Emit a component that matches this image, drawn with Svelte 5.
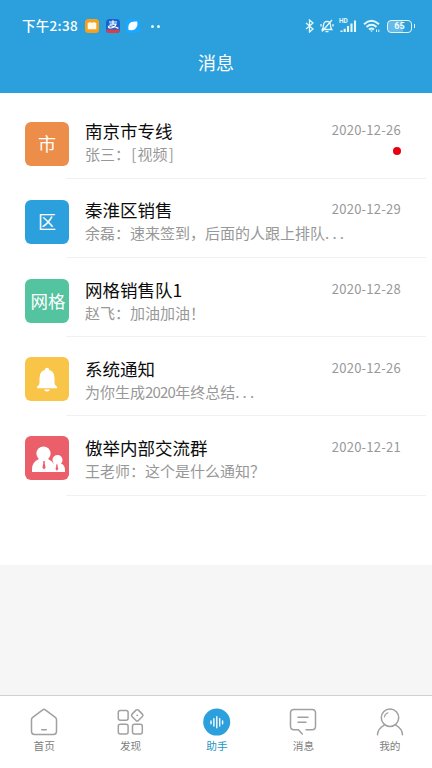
<script lang="ts">
  type Chat = {
    kind: string;
    label?: string;
    color: string;
    title: string;
    preview: string;
    date: string;
    unread?: boolean;
  };

  const chats: Chat[] = [
    { kind: 'text', label: '市', color: '#ed8d4a', title: '南京市专线', preview: '张三：[视频]', date: '2020-12-26', unread: true },
    { kind: 'text', label: '区', color: '#2ca0dc', title: '秦淮区销售', preview: '余磊：速来签到，后面的人跟上排队...', date: '2020-12-29' },
    { kind: 'text', label: '网格', color: '#54c3a0', title: '网格销售队1', preview: '赵飞：加油加油！', date: '2020-12-28' },
    { kind: 'bell', color: '#f9c548', title: '系统通知', preview: '为你生成2020年终总结...', date: '2020-12-26' },
    { kind: 'group', color: '#eb5f6b', title: '傲举内部交流群', preview: '王老师：这个是什么通知？', date: '2020-12-21' },
  ];

  const tabs = [
    { id: 'home', name: '首页' },
    { id: 'discover', name: '发现' },
    { id: 'assistant', name: '助手' },
    { id: 'message', name: '消息' },
    { id: 'mine', name: '我的' },
  ];

  let active = $state('assistant');

  // half-width characters get their own spans so they sit on a half-em grid
  function split(text: string) {
    return text.split(/(\d+|\.+|[[\]])/).filter(Boolean);
  }
</script>

<div class="phone">
  <header>
    <div class="status">
      <div class="status-left">
        <span class="time">下午2:38</span>
        <svg width="14" height="14" viewBox="0 0 14 14">
          <rect width="14" height="14" rx="3.5" fill="#f6a01f" />
          <path d="M2.7 4Q5 2.8 7 3.8Q9 2.8 11.3 4V10.3H2.7Z" fill="#fffbe8" />
        </svg>
        <svg width="14" height="14" viewBox="0 0 14 14">
          <rect width="14" height="14" rx="3.5" fill="#1763cf" />
          <path d="M0.3 10.4H13.7Q13.4 14 10.5 14H3.5Q0.6 14 0.3 10.4Z" fill="#dc3c48" />
          <path d="M3 3H11M7 1.3V5M3.7 5.2H10Q9 8.5 5 9Q2 9 2.5 7.5Q4 5.5 12.5 9.4" fill="none" stroke="#fff" stroke-width="1.2" />
        </svg>
        <svg width="14" height="14" viewBox="0 0 14 14">
          <rect width="14" height="14" rx="3.5" fill="#18a8ff" />
          <path d="M2.5 10.7Q1.6 5 5.3 3.1Q8 2 11.2 2.6Q12.2 7.5 9 10.2Q6 12 2.5 10.7Z" fill="#fff" />
        </svg>
        <span class="dots"><i></i><i></i></span>
      </div>
      <div class="status-right">
        <svg width="9" height="14" viewBox="0 0 9 14">
          <path d="M1 4L8 10L4.5 13V1L8 4L1 10" />
        </svg>
        <svg width="14" height="14" viewBox="0 0 14 14">
          <path d="M2.3 10.5Q3.5 9 3.5 6Q3.8 2.5 7 2.3Q10.3 2.5 10.5 6Q10.5 9 11.7 10.5ZM5.5 12.7H8.5M12 1L2 12.5M1 5V7.5M13 5V7.5" />
        </svg>
        <span class="signal">
          <small>HD</small>
          <svg width="17" height="14" viewBox="0 0 17 14">
            <path d="M1.5 13V11.5M4.7 13V9.7M8 13V7M11.5 13V4.4M15 13V1.5" stroke-width="2.1" />
          </svg>
        </span>
        <svg class="wifi" width="18" height="14" viewBox="0 0 18 14">
          <path d="M1 5.2Q8.5 -1.6 16 5.2M3.5 8Q8.5 3.6 13.5 8M6 10.5Q8.5 8.5 11 10.5" stroke-width="1.9" />
          <path d="M7 11.4H10L8.5 13Z" fill="#e4f8f5" stroke="none" />
          <path d="M13.5 13V10.5M15.8 13V10.5" stroke-width="1" />
        </svg>
        <span class="battery">65</span>
      </div>
    </div>
    <h1>消息</h1>
  </header>

  <main>
    {#each chats as chat}
      <article class="chat">
        <div class="avatar" class:wide={chat.label?.length === 2} style:background={chat.color}>
          {#if chat.kind === 'text'}
            {chat.label}
          {:else if chat.kind === 'bell'}
            <svg width="44" height="44" viewBox="0 0 44 44" fill="#fff">
              <circle cx="22" cy="13" r="2.2" />
              <path d="M14.5 26V21Q14.5 13 22 12.8Q29.5 13 29.5 21V26Q29.5 28.3 32 29.7V31.3H12V29.7Q14.5 28.3 14.5 26Z" />
              <path d="M19 32.4H25Q24.5 34.4 22 34.4Q19.5 34.4 19 32.4Z" />
            </svg>
          {:else}
            <svg width="44" height="44" viewBox="0 0 44 44" fill="#fff">
              <circle cx="18.5" cy="17.5" r="7.1" />
              <path d="M7 36V33Q7 26 14 23H23Q27 24.8 29 28V36Z" />
              <circle cx="32.5" cy="24" r="5" />
              <path d="M24 36V31Q25.5 28.5 29.5 27.3H35.5Q40 29 40 34V36Z" />
              <path d="M18 25.3H20L19.7 27.3L20.6 31.6L19 33.6L17.4 31.6L18.3 27.3ZM31 28.5H32.8L32.5 30L33.3 33L31.9 34.7L30.5 33L31.3 30Z" fill="#eb5f6b" />
            </svg>
          {/if}
        </div>
        <div class="content">
          <div class="text">
            <h2>{chat.title}</h2>
            <p>
              {#each split(chat.preview) as part}<span
                  class:digits={/\d/.test(part)}
                  class:ellipsis={part[0] === '.'}
                  class:bracket={part === '[' || part === ']'}>{part}</span
                >{/each}
            </p>
          </div>
          <div class="meta">
            <time>{chat.date}</time>
            {#if chat.unread}<span class="unread"></span>{/if}
          </div>
        </div>
      </article>
    {/each}
  </main>

  <nav>
    {#each tabs as tab}
      <button class:active={active === tab.id} onclick={() => (active = tab.id)}>
        <svg width="28" height="28" viewBox="0 0 28 28">
          {#if tab.id === 'home'}
            <path d="M14 1.3Q14.7 1.3 15.3 1.8L25.3 9.3Q26.5 10.2 26.5 11.5V23.5Q26.5 26.4 23.6 26.4H4.4Q1.5 26.4 1.5 23.5V11.5Q1.5 10.2 2.7 9.3L12.7 1.8Q13.3 1.3 14 1.3ZM11.7 21.8H16.3" />
          {:else if tab.id === 'discover'}
            <rect x="1.3" y="2.5" width="9.8" height="9.8" rx="2" />
            <rect x="1.3" y="16.3" width="9.8" height="9.8" rx="2" />
            <rect x="15.5" y="16.3" width="9.8" height="9.8" rx="2" />
            <rect x="15.7" y="2.8" width="9" height="9" rx="1.7" transform="rotate(45 20.2 7.3)" />
            <circle cx="20.2" cy="7.3" r="0.9" fill="#a0a0a0" stroke="none" />
          {:else if tab.id === 'assistant'}
            <circle cx="13.7" cy="14.1" r="13.5" fill="#2ca0dc" stroke="none" />
            <path d="M8 13V15.8M10.9 10.6V18M13.8 8.7V19.7M16.7 10.6V18M19.6 13V15.8" stroke="#fff" stroke-width="1.4" />
          {:else if tab.id === 'message'}
            <path d="M9.3 21.8H5Q1.5 21.8 1.5 18.3V5Q1.5 1.5 5 1.5H23Q26.5 1.5 26.5 5V18.3Q26.5 21.8 23 21.8H17M9.3 21.8L13.3 26M9 9.2H19M9 14.3H17" />
          {:else}
            <circle cx="14" cy="9.7" r="8.7" />
            <path d="M1.5 26.8Q2 20.5 8.3 17.2M26.5 26.8Q26 20.5 19.7 17.2" />
            <path d="M8.4 9Q8.8 5.8 12 4.8" stroke-width="1.1" />
          {/if}
        </svg>
        <span>{tab.name}</span>
      </button>
    {/each}
  </nav>
</div>

<style>
  :global(body) {
    margin: 0;
  }

  .phone {
    width: 432px;
    height: 768px;
    display: flex;
    flex-direction: column;
    overflow: hidden;
    background: #f6f6f6;
    font-family: 'Noto Sans CJK SC', sans-serif;
  }

  header {
    flex: none;
    height: 93px;
    box-sizing: border-box;
    padding-top: 16px;
    background: #2ca0dc;
    color: #fff;
  }

  .status {
    display: flex;
    justify-content: space-between;
    height: 20px;
    padding: 0 17px 0 22px;
  }

  .status-left,
  .status-right {
    display: flex;
    align-items: center;
  }

  .status-left {
    gap: 6.5px;
  }

  .time {
    font-size: 13.5px;
    font-weight: 500;
    line-height: 18px;
    height: 20px;
    width: 56.5px;
    white-space: nowrap;
    letter-spacing: 0.3px;
  }

  .dots {
    display: flex;
    gap: 3px;
    margin-left: 4px;
  }

  .dots i {
    width: 3px;
    height: 3px;
    border-radius: 50%;
    background: #e4f8f5;
  }

  .status-right {
    gap: 6px;
  }

  .status-right svg {
    fill: none;
    stroke: #e4f8f5;
    stroke-width: 1.3;
  }

  .signal {
    position: relative;
    display: flex;
  }

  .signal small {
    position: absolute;
    top: -1px;
    left: -1px;
    font: 700 6.5px/7px Roboto, sans-serif;
    color: #e4f8f5;
  }

  .battery {
    position: relative;
    width: 25px;
    height: 13px;
    box-sizing: border-box;
    margin-right: 3px;
    border: 1.5px solid #e4f8f5;
    border-radius: 4px;
    background: linear-gradient(90deg, #67b9e8 65%, transparent 65%);
    color: #f2fffd;
    font: 700 9px/11px Roboto, sans-serif;
    text-align: center;
  }

  .battery::after {
    content: '';
    position: absolute;
    right: -4px;
    top: 3px;
    width: 1.5px;
    height: 4px;
    background: #e4f8f5;
  }

  h1 {
    margin: 13px 0 0;
    font-size: 18px;
    font-weight: 400;
    line-height: 27px;
    text-align: center;
  }

  main {
    height: 472px;
    box-sizing: border-box;
    padding-top: 6.6px;
    background: #fff;
  }

  .chat {
    display: flex;
    height: 79.2px;
    padding-left: 25px;
  }

  .avatar {
    flex: none;
    width: 44px;
    height: 44px;
    margin-top: 22px;
    border-radius: 6px;
    color: #fff;
    font-family: KaiTi, STKaiti, 'Noto Sans CJK SC', sans-serif;
    font-size: 18px;
    line-height: 43px;
    text-align: center;
  }

  .chat:nth-child(n + 2) .avatar {
    margin-top: 21.4px;
  }

  .chat:nth-child(n + 4) .avatar {
    margin-top: 20px;
  }

  .avatar.wide {
    font-size: 17.5px;
    text-indent: 2px;
    white-space: nowrap;
  }

  .avatar svg {
    display: block;
  }

  .content {
    flex: 1;
    position: relative;
    display: flex;
    justify-content: space-between;
    padding: 18.6px 31px 0 16px;
  }

  .content::after {
    content: '';
    position: absolute;
    left: -3px;
    right: 6px;
    bottom: 0;
    height: 1px;
    background: #f1f1f1;
  }

  h2 {
    margin: 0;
    font-size: 17.5px;
    font-weight: 400;
    line-height: 25px;
    color: #0c0c0c;
    white-space: nowrap;
  }

  p {
    margin: 0;
    font-size: 15px;
    line-height: 21px;
    color: #989898;
    white-space: nowrap;
  }

  .digits {
    letter-spacing: -0.8px;
  }

  .ellipsis {
    letter-spacing: 3.2px;
  }

  .bracket {
    display: inline-block;
    width: 7.5px;
    text-align: center;
  }

  .text {
    width: 230px;
  }

  .meta {
    display: flex;
    flex-direction: column;
    align-items: flex-end;
  }

  time {
    font-size: 13px;
    line-height: 24px;
    letter-spacing: 0.25px;
    color: #989898;
  }

  .unread {
    width: 8px;
    height: 8px;
    margin-top: 5px;
    border-radius: 50%;
    background: #e60012;
  }

  nav {
    flex: none;
    display: flex;
    height: 73px;
    box-sizing: border-box;
    margin-top: auto;
    padding-left: 1px;
    margin-right: -1px;
    border-top: 1.5px solid #d0d0d0;
    background: #fff;
  }

  button {
    flex: 1;
    display: flex;
    flex-direction: column;
    align-items: center;
    padding: 12px 0 0;
    border: 0;
    background: none;
    color: #808080;
    font-family: inherit;
    font-size: 10.7px;
    line-height: 16px;
  }

  button svg {
    fill: none;
    stroke: #a0a0a0;
    stroke-width: 1.5;
    stroke-linecap: round;
    stroke-linejoin: round;
  }

  button span {
    margin-top: 2px;
  }

  button.active {
    color: #2494bf;
  }
</style>
